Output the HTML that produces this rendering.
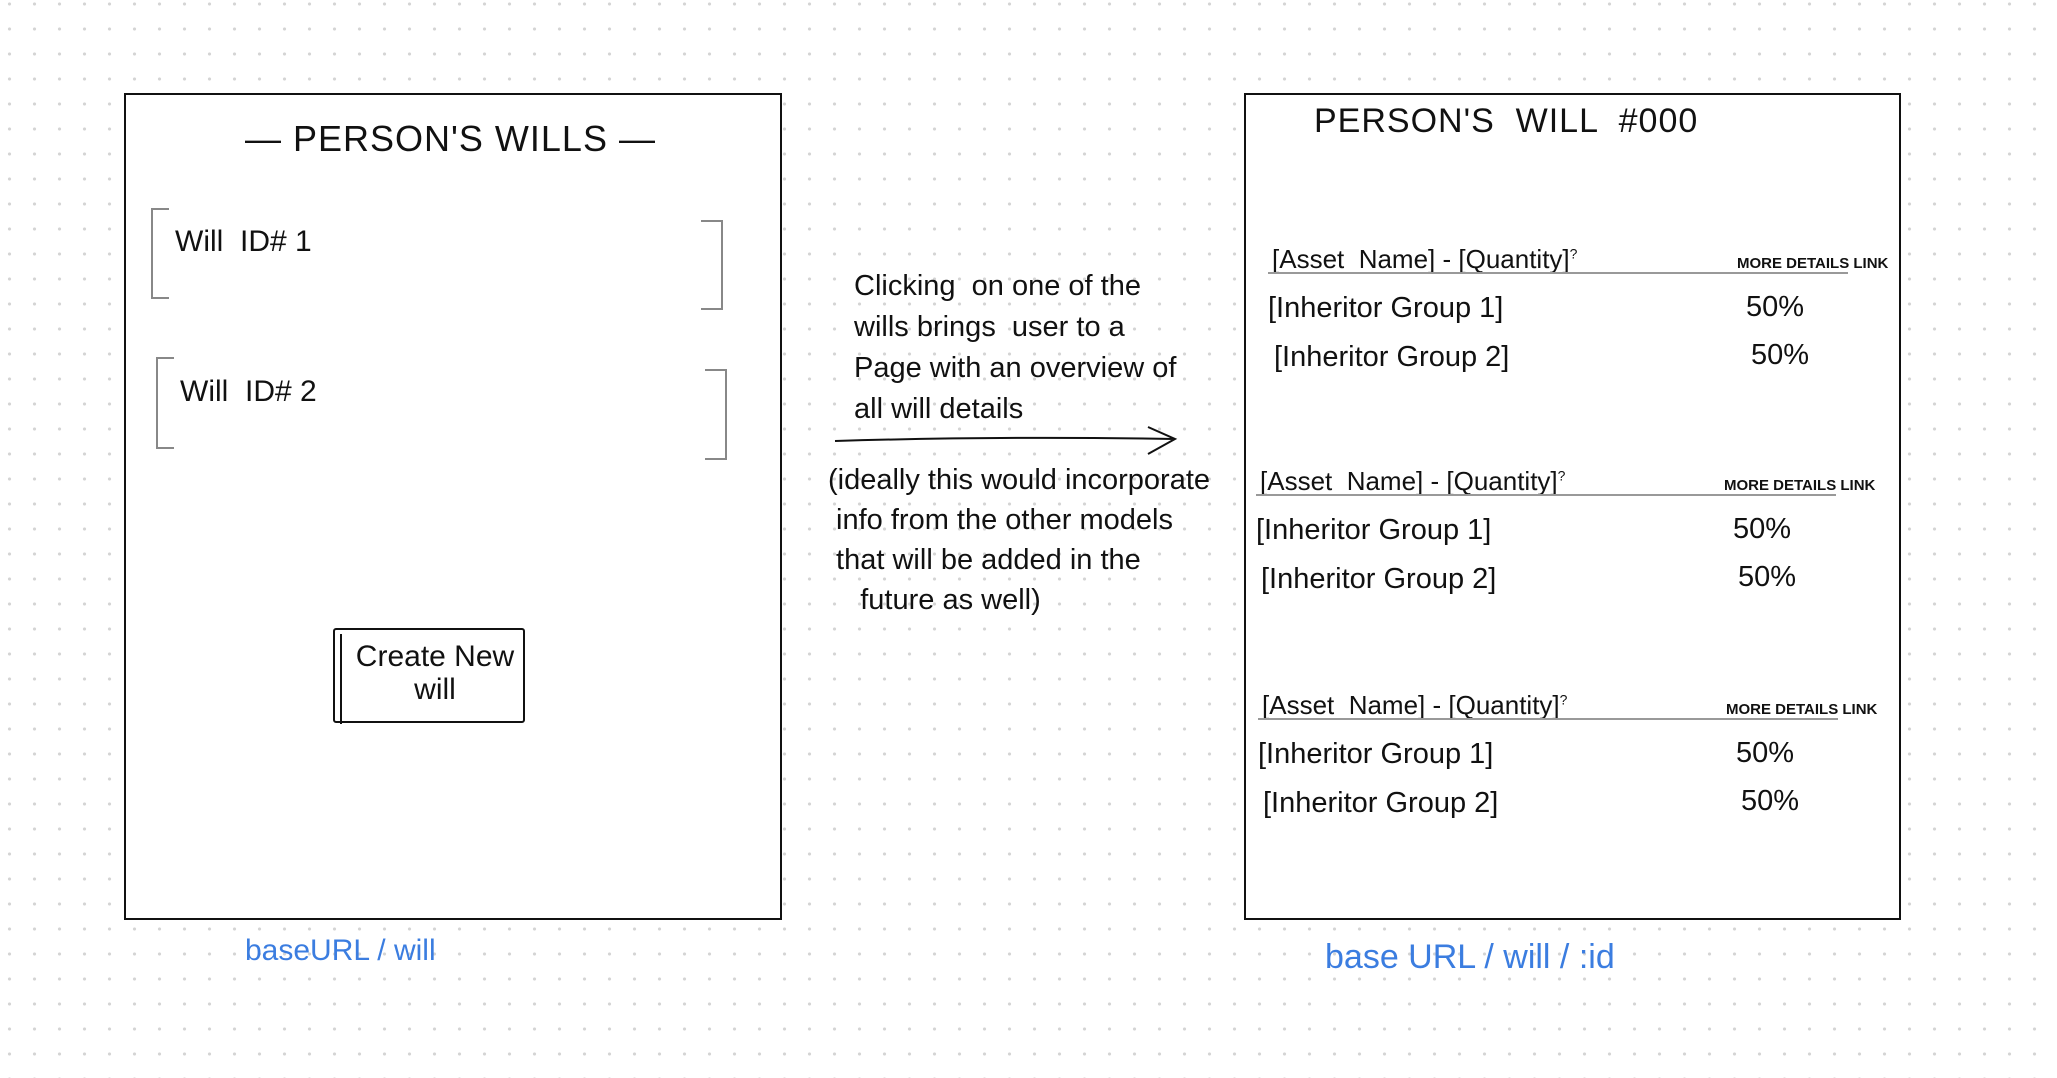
<!DOCTYPE html>
<html><head><meta charset="utf-8"><style>
html,body{margin:0;padding:0}
body{width:2057px;height:1078px;position:relative;overflow:hidden;background-color:#fff;
background-image:radial-gradient(circle,#d4d4d4 1.4px,transparent 1.8px);background-size:25px 25px;background-position:-3px -8.5px;
font-family:"Liberation Sans",sans-serif;color:#111}
.box{position:absolute;border:2px solid #111;background:#fff;box-sizing:border-box}
.t{position:absolute;white-space:nowrap;line-height:1;font-weight:300}
.br{position:absolute;border:2px solid #888;box-sizing:border-box}
.bl{border-right:none}.brr{border-left:none}
.ln{position:absolute;height:2px;background:#999}
.blue{color:#3b7de0}
</style></head><body>
<div class="box" style="left:124px;top:93px;width:658px;height:827px"></div>
<div class="box" style="left:1244px;top:93px;width:657px;height:827px"></div>

<div class="t" style="left:245px;top:121px;font-size:36px;letter-spacing:1px">— PERSON'S WILLS —</div>
<div class="br bl" style="left:151px;top:208px;width:18px;height:91px"></div>
<div class="br brr" style="left:701px;top:220px;width:22px;height:90px"></div>
<div class="t" style="left:175px;top:227px;font-size:30px">Will &nbsp;ID# 1</div>
<div class="br bl" style="left:156px;top:357px;width:18px;height:92px"></div>
<div class="br brr" style="left:705px;top:369px;width:22px;height:91px"></div>
<div class="t" style="left:180px;top:377px;font-size:30px">Will &nbsp;ID# 2</div>
<div style="position:absolute;left:333px;top:628px;width:192px;height:95px;border:2px solid #111;box-sizing:border-box;border-radius:3px"></div>
<div style="position:absolute;left:340px;top:634px;width:2px;height:90px;background:#111"></div>
<div class="t" style="left:350px;top:640px;font-size:30px;width:170px;text-align:center;line-height:1.1">Create New<br>will</div>
<div class="t blue" style="left:245px;top:936px;font-size:30px">baseURL / will</div>

<div class="t" style="left:854px;top:266px;font-size:29px;line-height:41px">Clicking &nbsp;on one of the<br>wills brings &nbsp;user to a<br>Page with an overview of<br>all will details</div>
<svg style="position:absolute;left:830px;top:424px" width="360" height="34"><path d="M5 17 Q170 12 345 15 M318 3 L345 15 L318 30" fill="none" stroke="#111" stroke-width="2"/></svg>
<div class="t" style="left:828px;top:460px;font-size:29px;line-height:40px">(ideally this would incorporate<br>&nbsp;info from the other models<br>&nbsp;that will be added in the<br>&nbsp;&nbsp;&nbsp;&nbsp;future as well)</div>

<div class="t" style="left:1314px;top:104px;font-size:34px;letter-spacing:1px">PERSON'S &nbsp;WILL &nbsp;#000</div>

<div class="t" style="left:1272px;top:246px;font-size:26px">[Asset &nbsp;Name] - [Quantity]<sup style="font-size:14px">?</sup></div>
<div class="t" style="left:1737px;top:256px;font-size:15px;font-weight:bold">MORE DETAILS LINK</div>
<div class="ln" style="left:1268px;top:272px;width:580px"></div>
<div class="t" style="left:1268px;top:294px;font-size:29px">[Inheritor Group 1]</div>
<div class="t" style="left:1746px;top:293px;font-size:29px">50%</div>
<div class="t" style="left:1274px;top:343px;font-size:29px">[Inheritor Group 2]</div>
<div class="t" style="left:1751px;top:341px;font-size:29px">50%</div>

<div class="t" style="left:1260px;top:468px;font-size:26px">[Asset &nbsp;Name] - [Quantity]<sup style="font-size:14px">?</sup></div>
<div class="t" style="left:1724px;top:478px;font-size:15px;font-weight:bold">MORE DETAILS LINK</div>
<div class="ln" style="left:1256px;top:494px;width:580px"></div>
<div class="t" style="left:1256px;top:516px;font-size:29px">[Inheritor Group 1]</div>
<div class="t" style="left:1733px;top:515px;font-size:29px">50%</div>
<div class="t" style="left:1261px;top:565px;font-size:29px">[Inheritor Group 2]</div>
<div class="t" style="left:1738px;top:563px;font-size:29px">50%</div>

<div class="t" style="left:1262px;top:692px;font-size:26px">[Asset &nbsp;Name] - [Quantity]<sup style="font-size:14px">?</sup></div>
<div class="t" style="left:1726px;top:702px;font-size:15px;font-weight:bold">MORE DETAILS LINK</div>
<div class="ln" style="left:1258px;top:718px;width:580px"></div>
<div class="t" style="left:1258px;top:740px;font-size:29px">[Inheritor Group 1]</div>
<div class="t" style="left:1736px;top:739px;font-size:29px">50%</div>
<div class="t" style="left:1263px;top:789px;font-size:29px">[Inheritor Group 2]</div>
<div class="t" style="left:1741px;top:787px;font-size:29px">50%</div>

<div class="t blue" style="left:1325px;top:940px;font-size:34px">base URL / will / :id</div>
</body></html>
